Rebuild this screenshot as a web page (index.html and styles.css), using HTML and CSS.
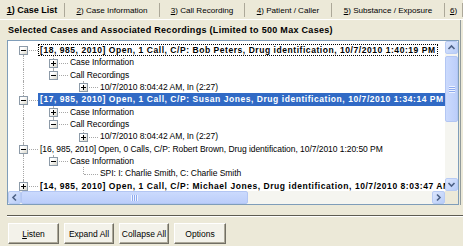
FILE: index.html
```html
<!DOCTYPE html>
<html lang="en">
<head>
  <meta charset="UTF-8" />
  <title>Case List</title>
  <link rel="stylesheet" href="styles.css">
</head>
<body>
  <div class="tabs">
    <div class="tab active"><u>1</u>) Case List</div>
    <div class="tab"><u>2</u>) Case Information</div>
    <div class="tab"><u>3</u>) Call Recording</div>
    <div class="tab"><u>4</u>) Patient / Caller</div>
    <div class="tab"><u>5</u>) Substance / Exposure</div>
    <div class="tab"><u>6</u>)</div>
  </div>

  <div class="page">
    <div class="caption">Selected Cases and Associated Recordings (Limited to 500 Max Cases)</div>

    <div class="tree-frame">
      <div class="tree-view">
        <div class="row">
          <span class="g first"><i class="bx minus"></i></span>
          <span class="lbl b focus">[18, 985, 2010] Open, 1 Call, C/P: Bob Peters, Drug identification, 10/7/2010 1:40:19 PM</span>
        </div>
        <div class="row">
          <span class="g pipe"></span><span class="g tee"><i class="bx plus"></i></span>
          <span class="lbl">Case Information</span>
        </div>
        <div class="row">
          <span class="g pipe"></span><span class="g elbow"><i class="bx minus"></i></span>
          <span class="lbl">Call Recordings</span>
        </div>
        <div class="row">
          <span class="g pipe"></span><span class="g"></span><span class="g elbow"><i class="bx plus"></i></span>
          <span class="lbl">10/7/2010 8:04:42 AM, In (2:27)</span>
        </div>
        <div class="row">
          <span class="g tee"><i class="bx minus"></i></span>
          <span class="lbl b sel">[17, 985, 2010] Open, 1 Call, C/P: Susan Jones, Drug identification, 10/7/2010 1:34:14 PM</span>
        </div>
        <div class="row">
          <span class="g pipe"></span><span class="g tee"><i class="bx plus"></i></span>
          <span class="lbl">Case Information</span>
        </div>
        <div class="row">
          <span class="g pipe"></span><span class="g elbow"><i class="bx minus"></i></span>
          <span class="lbl">Call Recordings</span>
        </div>
        <div class="row">
          <span class="g pipe"></span><span class="g"></span><span class="g elbow"><i class="bx plus"></i></span>
          <span class="lbl">10/7/2010 8:04:42 AM, In (2:27)</span>
        </div>
        <div class="row">
          <span class="g tee"><i class="bx minus"></i></span>
          <span class="lbl">[16, 985, 2010] Open, 0 Calls, C/P: Robert Brown, Drug identification, 10/7/2010 1:20:50 PM</span>
        </div>
        <div class="row">
          <span class="g pipe"></span><span class="g elbow"><i class="bx minus"></i></span>
          <span class="lbl">Case Information</span>
        </div>
        <div class="row">
          <span class="g pipe"></span><span class="g"></span><span class="g elbow"></span>
          <span class="lbl">SPI: I: Charlie Smith, C: Charlie Smith</span>
        </div>
        <div class="row">
          <span class="g tee"><i class="bx plus"></i></span>
          <span class="lbl b">[14, 985, 2010] Open, 1 Call, C/P: Michael Jones, Drug identification, 10/7/2010 8:03:47 AM</span>
        </div>
      </div>

      <div class="vscroll">
        <div class="sb-btn">
          <svg width="13" height="13" viewBox="0 0 13 13"><polyline points="3.5,8 6.5,5 9.5,8" fill="none" stroke="#4d6185" stroke-width="1.6"/></svg>
        </div>
        <div class="sb-track">
          <div class="thumb v"><span class="grip"></span></div>
        </div>
        <div class="sb-btn">
          <svg width="13" height="13" viewBox="0 0 13 13"><polyline points="3.5,5 6.5,8 9.5,5" fill="none" stroke="#4d6185" stroke-width="1.6"/></svg>
        </div>
      </div>

      <div class="hscroll">
        <div class="sb-btn">
          <svg width="13" height="13" viewBox="0 0 13 13"><polyline points="8,3.5 5,6.5 8,9.5" fill="none" stroke="#4d6185" stroke-width="1.6"/></svg>
        </div>
        <div class="sb-track">
          <div class="thumb h"><span class="grip"></span></div>
        </div>
        <div class="sb-btn">
          <svg width="13" height="13" viewBox="0 0 13 13"><polyline points="5,3.5 8,6.5 5,9.5" fill="none" stroke="#4d6185" stroke-width="1.6"/></svg>
        </div>
      </div>

      <div class="corner"></div>
    </div>
  </div>

  <div class="sep"></div>

  <div class="buttons">
    <div class="btn"><u>L</u>isten</div>
    <div class="btn">Expand All</div>
    <div class="btn">Collapse All</div>
    <div class="btn">Options</div>
  </div>
</body>
</html>
```

FILE: styles.css
```css
body {
  margin: 0;
  width: 463px;
  height: 246px;
  overflow: hidden;
  background: #ece9d8;
  color: #000;
  font-family: "Liberation Sans", Arial, sans-serif;
  font-size: 8.5px;
}

/* tab strip */
.tabs {
  display: grid;
  grid-template-columns: 65px 95px 85px 87px 113px 1fr;
  height: 20px;
  box-sizing: border-box;
  border-bottom: 1px solid #fff;
}

.tab {
  display: flex;
  align-items: center;
  justify-content: center;
  margin: 3px 0 2px;
  border-right: 1px solid #aca899;
  font-size: 8.1px;
  white-space: nowrap;
}

.tab.active {
  font-size: 9px;
  font-weight: bold;
}

/* tab page */
.page {
  margin-right: 2px;
  padding-left: 7px;
  border-right: 1px solid #919b9c;
}

.caption {
  height: 20px;
  line-height: 21px;
  padding-left: 1px;
  font-size: 9px;
  font-weight: bold;
  letter-spacing: 0.3px;
  white-space: nowrap;
}

.tree-frame {
  display: grid;
  grid-template-columns: 1fr 13px;
  grid-template-rows: 150px 13px;
  width: 452px;
  box-sizing: border-box;
  border: 1px solid #7f9db9;
  background: #fff;
}

.tree-view {
  overflow: hidden;
  padding-top: 3px;
}

.row {
  display: flex;
  height: 12.35px;
  line-height: 12.35px;
  white-space: nowrap;
}

.g {
  position: relative;
  flex: none;
  width: 30px;
  height: 100%;
}

.g.pipe::before,
.g.tee::before,
.g.elbow::before,
.g.first::before {
  content: '';
  position: absolute;
  left: 15px;
  top: 0;
  bottom: 0;
  border-left: 1px dotted #a8a8a8;
}

.g.elbow::before {
  bottom: 50%;
}

.g.first::before {
  top: 50%;
}

.g.tee::after,
.g.elbow::after,
.g.first::after {
  content: '';
  position: absolute;
  left: 16px;
  right: 0;
  top: 50%;
  border-top: 1px dotted #a8a8a8;
}

.bx {
  position: absolute;
  z-index: 1;
  left: 11px;
  top: calc(50% - 4px);
  width: 9px;
  height: 9px;
  box-sizing: border-box;
  border: 1px solid #8c9aa8;
  background: linear-gradient(135deg, #fff 30%, #d8d6cb);
}

.bx::before,
.bx.plus::after {
  content: '';
  position: absolute;
  background: #000;
}

.bx::before {
  left: 1px;
  top: 3px;
  width: 5px;
  height: 1px;
}

.bx.plus::after {
  left: 3px;
  top: 1px;
  width: 1px;
  height: 5px;
}

.lbl {
  padding: 0 2px;
  letter-spacing: -0.05px;
}

.lbl.b {
  font-weight: bold;
  letter-spacing: 0.55px;
}

.lbl.focus {
  padding: 0 1px;
  border: 1px dotted #000;
  line-height: 10.35px;
}

.lbl.sel {
  background: #316ac5;
  color: #fff;
}

/* scrollbars */
.vscroll,
.hscroll {
  display: flex;
  background: #f5f5f0;
}

.vscroll {
  flex-direction: column;
}

.sb-btn {
  flex: none;
  width: 13px;
  height: 13px;
  box-sizing: border-box;
  border: 1px solid #b8cbf4;
  border-radius: 2px;
  background: linear-gradient(135deg, #dce6fd, #b8cdf8);
}

.sb-btn svg {
  display: block;
  margin: -1px;
}

.sb-track {
  flex: 1;
  display: flex;
}

.vscroll .sb-track {
  flex-direction: column;
}

.thumb {
  display: flex;
  align-items: center;
  justify-content: center;
  box-sizing: border-box;
  border: 1px solid #b3c6f3;
  border-radius: 2px;
  background: linear-gradient(90deg, #cbdafd, #bccefa);
}

.thumb.v {
  margin-top: 2px;
  height: 66px;
}

.thumb.h {
  width: 227px;
  background: linear-gradient(180deg, #cbdafd, #bccefa);
}

.thumb.v .grip {
  width: 6px;
  height: 7px;
  background: repeating-linear-gradient(180deg, #eef3fe 0 1px, #8eaaf0 1px 2px);
}

.thumb.h .grip {
  width: 7px;
  height: 6px;
  background: repeating-linear-gradient(90deg, #eef3fe 0 1px, #8eaaf0 1px 2px);
}

.corner {
  background: #ece9d8;
}

/* bottom bar */
.sep {
  margin: 10px 0 0 7px;
  border-top: 1px solid #5e5c52;
  border-bottom: 1px solid #fff;
}

.buttons {
  display: grid;
  grid-template-columns: 51px 50px 50px 52px;
  gap: 5px;
  padding: 6px 0 0 8px;
}

.btn {
  display: flex;
  align-items: center;
  justify-content: center;
  height: 21px;
  box-sizing: border-box;
  border: 1px solid;
  border-color: #fff #716f64 #716f64 #fff;
  box-shadow: inset -1px -1px #aca899;
  background: #f3f2ea;
  white-space: nowrap;
}
```
